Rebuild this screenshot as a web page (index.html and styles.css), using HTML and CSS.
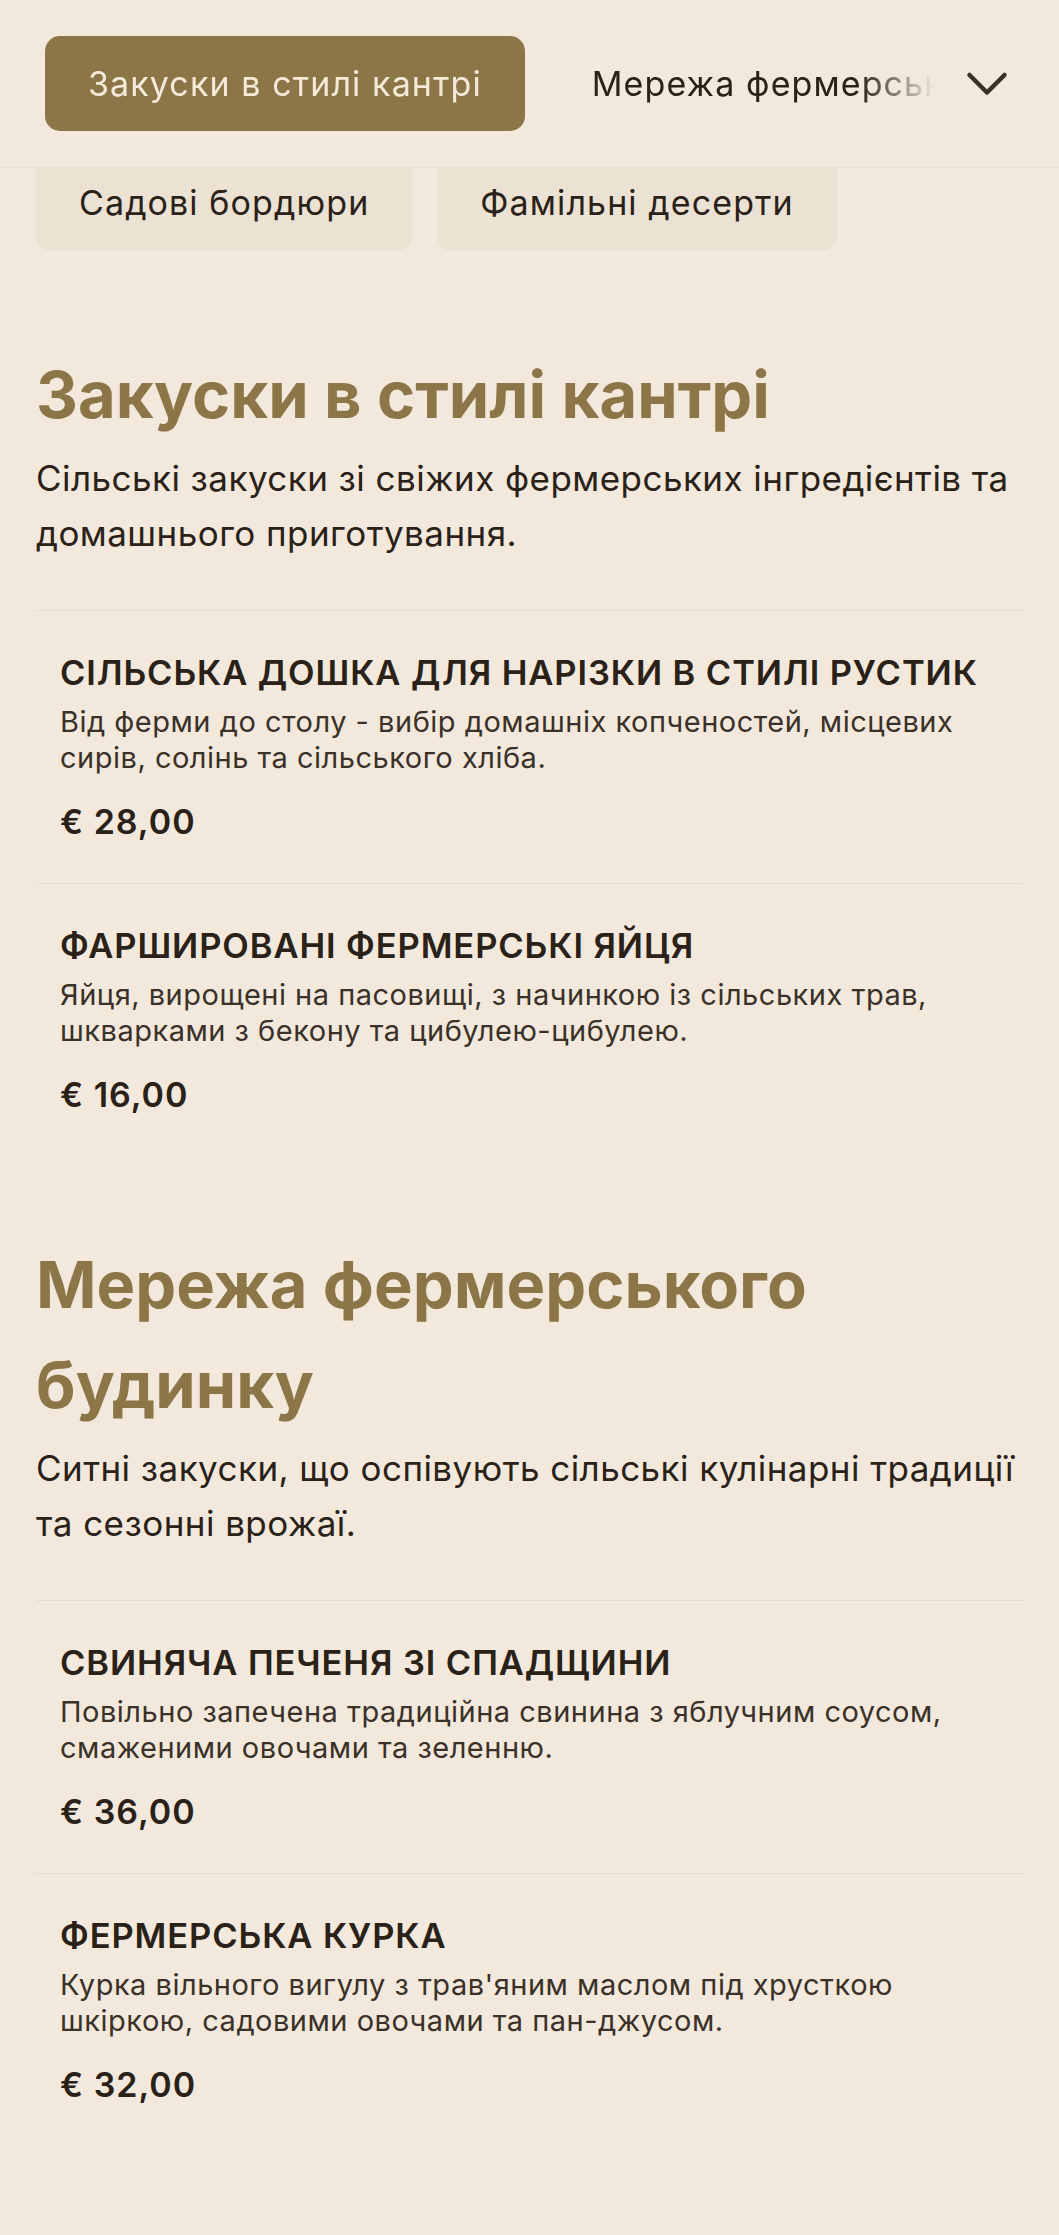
FILE: index.html
```html
<!DOCTYPE html>
<html lang="uk">
<head>
<meta charset="utf-8">
<title>Меню</title>
<link rel="stylesheet" href="styles.css">
</head>
<body>
<header class="topbar">
  <nav class="tabs">
    <a class="tab tab-active">Закуски в стилі кантрі</a>
    <a class="tab">Мережа фермерського будинку</a>
  </nav>
  <button class="more" aria-label="Більше категорій">
    <svg viewBox="0 0 42 26" width="42" height="26"><path d="M3.5 4 L21 21.5 L38.5 4" fill="none" stroke="#3a3126" stroke-width="4.5" stroke-linecap="round" stroke-linejoin="round"/></svg>
  </button>
</header>
<div class="pills">
  <a class="pill">Садові бордюри</a>
  <a class="pill">Фамільні десерти</a>
</div>
<main class="menu">
  <section class="category first">
    <h2 class="cat-title">Закуски в стилі кантрі</h2>
    <p class="cat-desc">Сільські закуски зі свіжих фермерських інгредієнтів та домашнього приготування.</p>
    <ul class="items">
      <li class="item">
        <h3 class="item-name">Сільська дошка для нарізки в стилі рустик</h3>
        <p class="item-desc">Від ферми до столу - вибір домашніх копченостей, місцевих сирів, солінь та сільського хліба.</p>
        <p class="item-price">€ 28,00</p>
      </li>
      <li class="item">
        <h3 class="item-name">Фаршировані фермерські яйця</h3>
        <p class="item-desc">Яйця, вирощені на пасовищі, з начинкою із сільських трав, шкварками з бекону та цибулею-цибулею.</p>
        <p class="item-price">€ 16,00</p>
      </li>
    </ul>
  </section>
  <section class="category">
    <h2 class="cat-title">Мережа фермерського будинку</h2>
    <p class="cat-desc">Ситні закуски, що оспівують сільські кулінарні традиції та сезонні врожаї.</p>
    <ul class="items">
      <li class="item">
        <h3 class="item-name">Свиняча печеня зі спадщини</h3>
        <p class="item-desc">Повільно запечена традиційна свинина з яблучним соусом, смаженими овочами та зеленню.</p>
        <p class="item-price">€ 36,00</p>
      </li>
      <li class="item">
        <h3 class="item-name">Фермерська курка</h3>
        <p class="item-desc">Курка вільного вигулу з трав'яним маслом під хрусткою шкіркою, садовими овочами та пан-джусом.</p>
        <p class="item-price">€ 32,00</p>
      </li>
    </ul>
  </section>
</main>
</body>
</html>
```
FILE: styles.css
```css
* { box-sizing: border-box; }
html, body {
  margin: 0;
  padding: 0;
  background: #f2e9dc;
  color: #2a2118;
  font-family: Inter, "Noto Sans", "Liberation Sans", sans-serif;
}
.topbar {
  position: relative;
  z-index: 2;
  display: flex;
  align-items: center;
  height: 168px;
  padding: 36px 0 36px 45px;
  background: #f2e9dc;
  border-bottom: 1px solid #e9dfcf;
}
.tabs {
  flex: 1;
  display: flex;
  gap: 24px;
  overflow: hidden;
  white-space: nowrap;
  -webkit-mask-image: linear-gradient(to right, #000 calc(100% - 80px), transparent calc(100% - 4px));
  mask-image: linear-gradient(to right, #000 calc(100% - 80px), transparent calc(100% - 4px));
}
.tab {
  flex: none;
  display: flex;
  align-items: center;
  height: 95px;
  padding: 0 43px;
  border-radius: 15px;
  font-size: 34px;
  letter-spacing: 1.1px;
  color: #2a2118;
}
.tab-active {
  background: #8c7547;
  color: #f5ead8;
}
.more {
  flex: none;
  display: flex;
  align-items: center;
  justify-content: center;
  width: 42px;
  height: 42px;
  margin: 0 51px 0 26px;
  padding: 0;
  border: 0;
  background: none;
}
.more svg { display: block; }
.pills {
  position: relative;
  z-index: 1;
  display: flex;
  gap: 25px;
  margin-top: -14px;
  padding: 0 36px;
}
.pill {
  display: flex;
  align-items: center;
  height: 97px;
  padding: 0 43px;
  border-radius: 15px;
  background: #ebe2d3;
  font-size: 34px;
  letter-spacing: 1.1px;
  color: #2a2118;
}
.menu {
  padding: 0 36px 40px;
}
.category {
  padding-top: 79px;
}
.category.first {
  padding-top: 94px;
}
.cat-title {
  margin: 0;
  font-size: 65px;
  line-height: 100px;
  font-weight: 700;
  color: #8c7547;
  letter-spacing: 0;
}
.cat-desc {
  margin: 6px 0 0;
  font-size: 35px;
  line-height: 55px;
  letter-spacing: 0.45px;
  color: #2a2118;
}
.items {
  list-style: none;
  margin: 49px 0 0;
  padding: 0;
}
.item {
  padding: 40px 24px;
  border-top: 1px solid #e8ddcc;
}
.item-name {
  margin: 0;
  font-size: 34.5px;
  line-height: 43px;
  font-weight: 600;
  letter-spacing: 0.9px;
  text-transform: uppercase;
  color: #2a2118;
}
.item-desc {
  margin: 10px 0 0;
  font-size: 29px;
  line-height: 36px;
  letter-spacing: 0.5px;
  color: #3a3128;
}
.item-price {
  margin: 24px 0 0;
  font-size: 34px;
  line-height: 43px;
  font-weight: 600;
  letter-spacing: 1px;
  color: #2a2118;
}
```
